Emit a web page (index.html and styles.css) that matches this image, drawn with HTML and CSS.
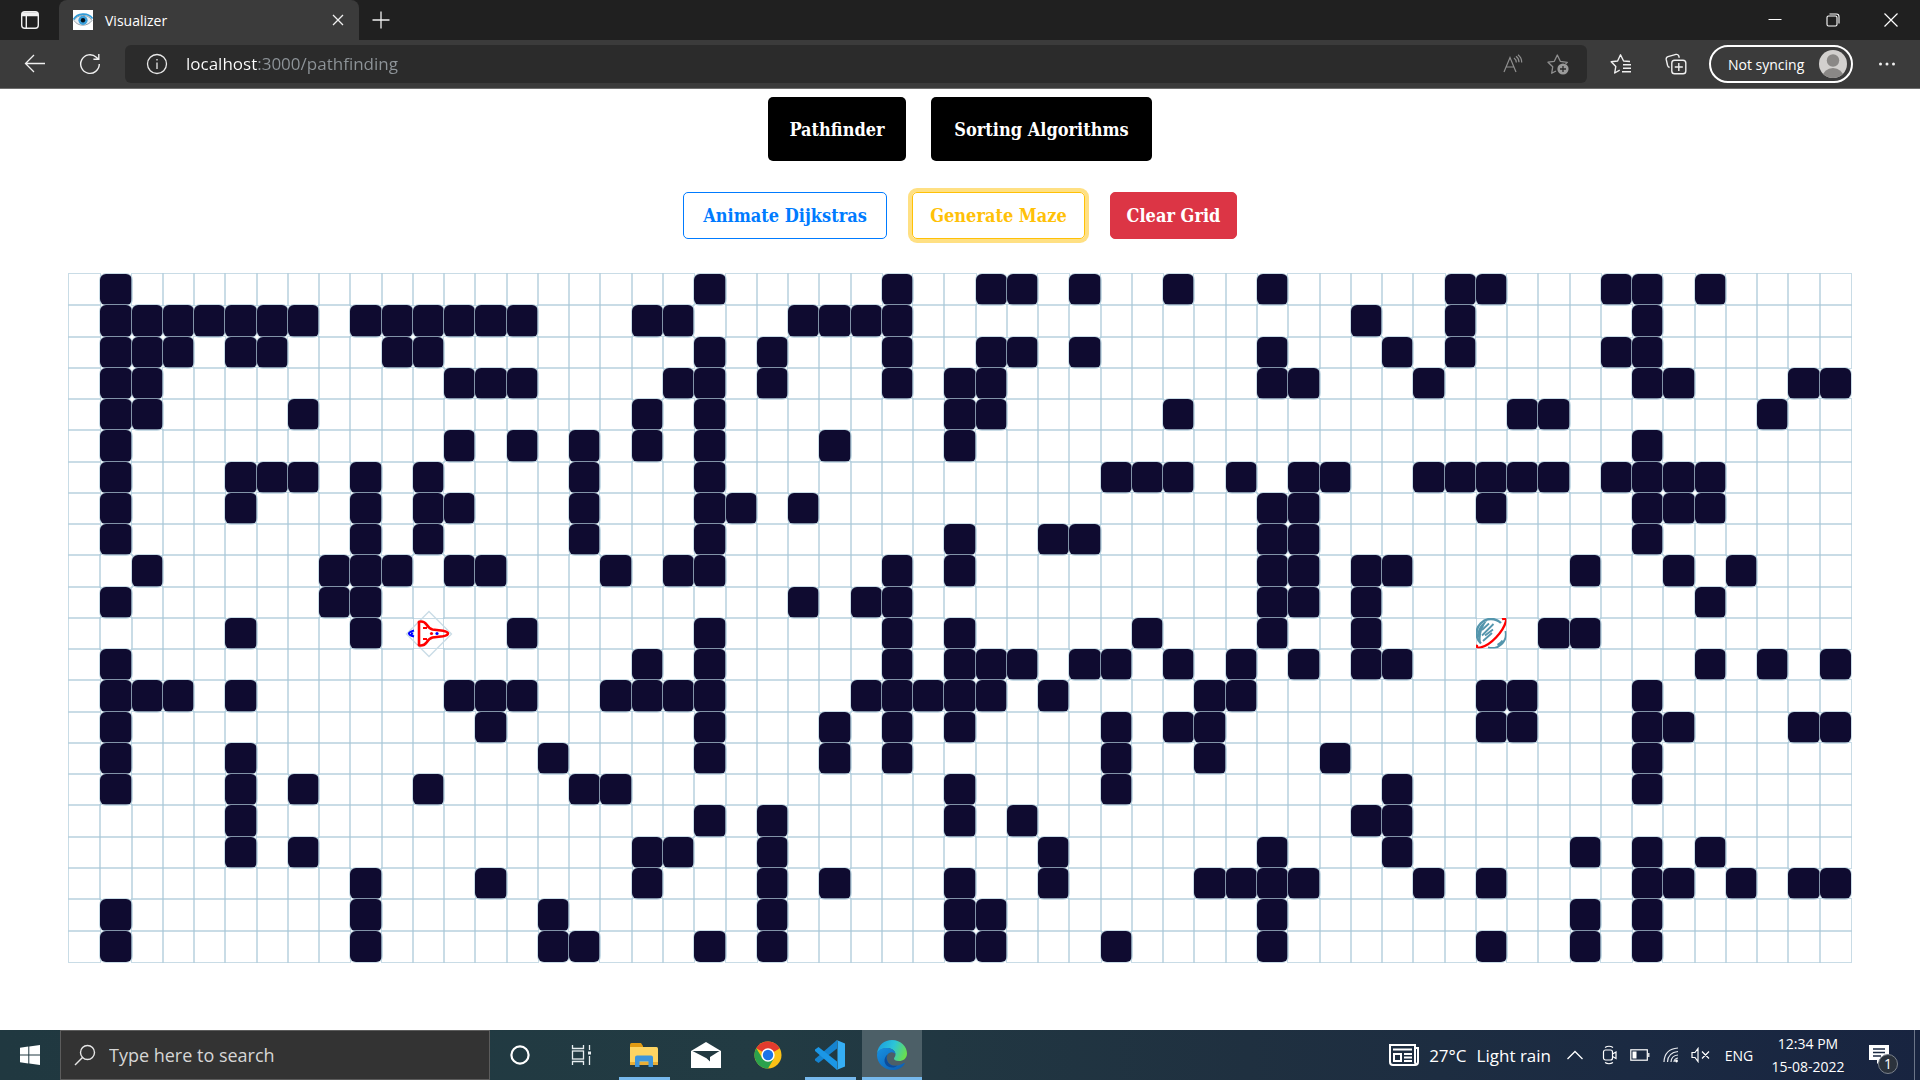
FILE: index.html
```html
<!DOCTYPE html>
<html lang="en">
<head>
<meta charset="utf-8">
<title>Visualizer</title>
<link rel="stylesheet" href="styles.css">
</head>
<body>
<header class="browser">
  <div class="tabstrip">
    <button class="icon-btn tab-actions" aria-label="Tab actions">
      <svg width="20" height="20" viewBox="0 0 20 20" fill="none" stroke="#f0f0f0" stroke-width="1.4"><rect x="1.7" y="1.7" width="16.6" height="16.6" rx="3"/><path d="M2 3.5h16M2 5h16" stroke-width="2.4"/><path d="M6.3 5v13"/></svg>
    </button>
    <div class="tab">
      <svg class="favicon" width="20" height="20" viewBox="0 0 20 20"><rect width="20" height="20" fill="#fff"/><path d="M1 10.5C4 4.500 15 3 19 10.500C15 16.500 5 17 1 10.500Z" fill="#e8eef2" stroke="#9aa3aa"/><path d="M0.500 9.500C4 3 15 2 19.500 8.500" fill="none" stroke="#2f9bd8" stroke-width="1.600"/><circle cx="10" cy="10.300" r="4.600" fill="#3aa0dc"/><circle cx="10" cy="10.300" r="2.200" fill="#06121c"/></svg>
      <span class="tab-title">Visualizer</span>
      <button class="icon-btn tab-close" aria-label="Close tab"><svg width="12" height="12" viewBox="0 0 12 12" stroke="#f0f0f0" stroke-width="1.3"><path d="M1 1l10 10M11 1L1 11"/></svg></button>
    </div>
    <button class="icon-btn new-tab" aria-label="New tab"><svg width="18" height="18" viewBox="0 0 18 18" stroke="#f0f0f0" stroke-width="1.3"><path d="M9 0.500v17M0.500 9h17"/></svg></button>
    <div class="window-controls">
      <button class="icon-btn" aria-label="Minimize"><svg width="14" height="14" viewBox="0 0 14 14" stroke="#fff"><path d="M0.500 6.500h13"/></svg></button>
      <button class="icon-btn" aria-label="Restore"><svg width="14" height="14" viewBox="0 0 14 14" fill="none" stroke="#fff" stroke-width="1.100"><rect x="1" y="3" width="10" height="10" rx="1.500"/><path d="M3.500 1h7q2.500 0 2.500 2.500v7"/></svg></button>
      <button class="icon-btn" aria-label="Close"><svg width="14" height="14" viewBox="0 0 14 14" stroke="#fff" stroke-width="1.200"><path d="M0.500 0.500l13 13M13.500 0.500l-13 13"/></svg></button>
    </div>
  </div>
  <div class="toolbar">
    <button class="icon-btn back" aria-label="Back"><svg width="22" height="20" viewBox="0 0 22 20" fill="none" stroke="#f0f0f0" stroke-width="1.300"><path d="M21 9.500H1.500M10 1L1.500 9.500 10 18"/></svg></button>
    <button class="icon-btn reload" aria-label="Refresh"><svg width="22" height="22" viewBox="0 0 22 22" fill="none" stroke="#f0f0f0" stroke-width="1.400"><path d="M20.300 11a9.300 9.300 0 1 1-3-6.800l2 1.800M19.800 1v5.300h-5.400"/></svg></button>
    <div class="address">
      <svg width="22" height="22" viewBox="0 0 22 22" fill="none" stroke="#e8e8e8" stroke-width="1.300"><circle cx="11" cy="11" r="9.500"/><path d="M11 9.500v6.500M11 6v1.600"/></svg>
      <input class="url" type="text" aria-label="Address" value="localhost:3000/pathfinding">
      <button class="icon-btn read-aloud" aria-label="Read aloud"><svg width="20" height="20" viewBox="0 0 20 20" fill="none" stroke="#8f8f8f" stroke-width="1.200"><path d="M1 18L7 3.500l6 14.500M3 13h8M11 4q2.300 1.700 2.300 4.500M13 2.300q3 2.200 3 6M15 0.800q3.700 2.800 3.700 7.700"/></svg></button>
      <button class="icon-btn" aria-label="Add to favorites"><svg width="22" height="22" viewBox="0 0 22 22" fill="none" stroke="#8f8f8f" stroke-width="1.300" stroke-linejoin="round"><path d="M9 18l-4.300 2.300 1-6.500L1 9.200l6.300-.9L10.300 2l3 6.300 7 1-1.800 1.800"/><circle cx="16" cy="16" r="5.600" fill="#9a9a9a" stroke="none"/><path d="M16 13v6M13 16h6" stroke="#2b2b2b"/></svg></button>
    </div>
    <button class="icon-btn favorites" aria-label="Favorites"><svg width="22" height="22" viewBox="0 0 22 22" fill="none" stroke="#f0f0f0" stroke-width="1.400" stroke-linejoin="round"><path d="M20 8.500l-6.400-.5L10.500 1.800 7.600 8l-6.400.8 4.600 4.600L4.700 20l5-2.800M13 11.800h8M13 15.300h8M12 18.800h9"/></svg></button>
    <button class="icon-btn collections" aria-label="Collections"><svg width="22" height="22" viewBox="0 0 22 22" fill="none" stroke="#f0f0f0" stroke-width="1.400"><path d="M4.600 14.500Q3 14 2.600 12.500L1.200 6.400Q1 4.200 3 3.600L11 1.400q2-.3 2.700 1.400l.6 2"/><rect x="6.800" y="7.300" width="14" height="13.500" rx="2.800"/><path d="M13.800 10v8M9.800 14h8"/></svg></button>
    <button class="profile">Not syncing
      <svg width="28" height="28" viewBox="0 0 28 28"><defs><clipPath id="face"><circle cx="14" cy="14" r="14"/></clipPath></defs><g clip-path="url(#face)"><rect width="28" height="28" fill="#d2d0ce"/><circle cx="14" cy="10.500" r="6.200" fill="#8a8886"/><ellipse cx="14" cy="27" rx="10.500" ry="9" fill="#8a8886"/></g></svg>
    </button>
    <button class="icon-btn more" aria-label="More"><svg width="18" height="6" viewBox="0 0 18 6" fill="#f0f0f0"><circle cx="2.500" cy="3" r="1.500"/><circle cx="9" cy="3" r="1.500"/><circle cx="15.500" cy="3" r="1.500"/></svg></button>
  </div>
</header>

<main class="page">
  <nav class="modes">
    <a class="mode mode-path" href="#pathfinding">Pathfinder</a>
    <a class="mode mode-sort" href="#sorting">Sorting Algorithms</a>
  </nav>
  <div class="actions">
    <button class="action action-animate">Animate Dijkstras</button>
    <button class="action action-maze">Generate Maze</button>
    <button class="action action-clear">Clear Grid</button>
  </div>
  <div class="board" id="board"></div>
</main>

<template id="start-icon">
  <svg class="ship" viewBox="0 0 48 48" fill="none"><path d="M24 1.500L46.500 24 24 46.500 1.500 24Z" stroke="#c9dce6" stroke-width="1.300"/><path d="M9 20.500q-10 3 0 6M6 23.500h2" stroke="#00f" stroke-width="2.200"/><path d="M14 13Q13 11.500 16 11.500q3.500 0 5.500 3 2.500 4 6 5 4.500.5 10.500 1.200 5 1 5 2.800t-5 2.800q-6 .7-10.500 1.200-3.500 1-6 5-2 3-5.500 3-3 0-2-1.500Z" stroke="red" stroke-width="2.600"/><path d="M18 18h4M18 29h4" stroke="red" stroke-width="2"/><circle cx="26.500" cy="23.500" r="1.600" fill="red"/><circle cx="32" cy="23.500" r="1.600" fill="#00f"/></svg>
</template>
<template id="end-icon">
  <svg class="planet" viewBox="0 0 31 31" fill="none"><path d="M25 5A13.500 13.500 0 0 0 5 25.500" stroke="#5596ad" stroke-width="2.400"/><path d="M11 2.800A14 14 0 0 0 5 25Q3 14 11 2.800Z" fill="#5596ad"/><path d="M29.500 13A14 14 0 0 1 12 29.500M26.500 22.500q-2 3-5 4.500" stroke="#5596ad" stroke-width="2"/><path d="M6 12l7-6.500M6 17.500L17.500 6M9 17.500l8-6M7 23l9-8" stroke="#5596ad" stroke-width="1.800"/><path d="M26 1.200q5-1.500 3.800 2.600-2 7.500-9.800 15.700T5 29.300q-5 1.500-4-2.500" stroke="red" stroke-width="2.400"/></svg>
</template>

<footer class="taskbar">
  <button class="icon-btn start" aria-label="Start"><svg width="20" height="20" viewBox="0 0 20 20" fill="#fff"><path d="M0 2.800l8.300-1.200v7.900H0zM9.300 1.400L20 0v9.500H9.300zM0 10.500h8.300v7.900L0 17.200zM9.300 10.500H20V20L9.300 18.600z"/></svg></button>
  <label class="search">
    <svg width="22" height="22" viewBox="0 0 22 22" fill="none" stroke="#e6e6e6" stroke-width="1.400"><circle cx="13.500" cy="8.500" r="7"/><path d="M8.500 13.500L1 21"/></svg>
    <input type="text" placeholder="Type here to search" aria-label="Search">
  </label>
  <div class="apps">
    <button class="app" aria-label="Cortana"><svg width="22" height="22" viewBox="0 0 22 22" fill="none" stroke="#fff" stroke-width="2.200"><circle cx="11" cy="11" r="8.600"/></svg></button>
    <button class="app" aria-label="Task view"><svg width="22" height="22" viewBox="0 0 22 22" fill="none" stroke="#e8eef0" stroke-width="1.300"><path d="M1.500 1v3.500h11V1M1.500 21v-3.500h11V21"/><rect x="1.500" y="7" width="11" height="8"/><path d="M18.500 1v5M18.500 12v9"/><path d="M18.500 7.500v3" stroke-width="3"/></svg></button>
    <button class="app running" aria-label="File Explorer"><svg width="28" height="26" viewBox="0 0 28 26"><path d="M0 2.500Q0 1 1.500 1H11l2 3v5H0z" fill="#e09a12"/><path d="M0 5h26.500q1.500 0 1.500 1.500V23H0z" fill="#fdd462"/><path d="M0 20h28v3H0z" fill="#e9ae35"/><path d="M5 25V15.500Q5 13.500 7 13.500h14q2 0 2 2V25h-4.500v-5.500h-9V25z" fill="#3d95db"/></svg></button>
    <button class="app" aria-label="Mail"><svg width="30" height="26" viewBox="0 0 30 26"><path d="M0 9L15 0l15 9v17H0z" fill="#fff"/><path d="M1.500 9h27L19 15v4.500l-3.500-3.200z" fill="#213840"/></svg></button>
    <button class="app" aria-label="Chrome"><svg width="28" height="28" viewBox="0 0 28 28"><circle cx="14" cy="14" r="13.500" fill="#fbc116"/><path d="M14 14L2.300 7.250A13.500 13.500 0 0 1 25.700 7.250z" fill="#e33b2e"/><path d="M2.300 7.250A13.500 13.500 0 0 0 14 27.500L19.800 17.500 14 14l-5.800 3z" fill="#2ba24c"/><path d="M25.700 7.250H14V14z" fill="#e33b2e"/><circle cx="14" cy="14" r="6.700" fill="#fff"/><circle cx="14" cy="14" r="5.200" fill="#1a73e8"/></svg></button>
    <button class="app running" aria-label="Visual Studio Code"><svg width="30" height="30" viewBox="0 0 30 30"><path d="M22 0v8.500L3.500 23 0 20.500v-1.500z" fill="#1583cf"/><path d="M22 30v-8.500L3.500 7 0 9.500v1.500z" fill="#1b97e6"/><path d="M21.500 0L30 3.500v23L21.500 30q1-.5 1-2V2q0-1.500-1-2z" fill="#35aef5"/></svg></button>
    <button class="app running active" aria-label="Edge"><svg width="30" height="30" viewBox="0 0 30 30"><defs><linearGradient id="edge-top" x1="0" x2="1" y1="0.300" y2="0.600"><stop offset="0" stop-color="#1c9fe0"/><stop offset=".5" stop-color="#2cc4d8"/><stop offset="1" stop-color="#6be04a"/></linearGradient><linearGradient id="edge-low" x1="0" x2="1" y1="0" y2="1"><stop offset="0" stop-color="#1790e0"/><stop offset="1" stop-color="#0c5cb0"/></linearGradient></defs><path d="M0 13.500C1 5 7.500 0 15 0c9 0 15 6.500 15 13.500 0 5-4 7.500-8 7.500-3.500 0-5-1.300-5-2.500 0-1 1.500-1.500 1.500-4C18.500 10.500 14.500 8 10 8 5 8 1.500 11 0 13.500z" fill="url(#edge-top)"/><path d="M0 15C0 10.500 4.500 8 9.500 8c5 0 9 2.500 9 6.500-1-2-3-2.500-5-2-3 .8-4.500 4-3.500 7.500 1.200 4.500 6 6.500 10.500 5.500 3-.5 5.500-2 6.500-2.500.8-.2 1 .5.500 1C25 28 20.500 30 15.500 30 6.500 30 0 23 0 15z" fill="url(#edge-low)"/><path d="M13.500 12.500c-3 .8-4.500 4-3.500 7.500 1.200 4.500 6 6.500 10.500 5.500-2 2-6 3-9.500 1C6 23.500 6 16 13.500 12.500z" fill="#0e4c99"/></svg></button>
  </div>
  <div class="tray">
    <button class="weather"><svg width="30" height="22" viewBox="0 0 30 22" fill="none" stroke="#fff" stroke-width="2"><path d="M26 4h3v14q0 3-3 3H4q-3 0-3-3V1h25v17q0 2 1.500 2"/><path d="M4 5.500h19M15 10h8M15 13.500h8M15 17h8"/><rect x="5" y="10" width="7" height="7"/></svg><span>27°C</span><span>Light rain</span></button>
    <button class="icon-btn chevron" aria-label="Hidden icons"><svg width="16" height="10" viewBox="0 0 16 10" fill="none" stroke="#fff" stroke-width="1.300"><path d="M0.500 9L8 1.500 15.500 9"/></svg></button>
    <button class="icon-btn meet" aria-label="Meet now"><svg width="16" height="20" viewBox="0 0 16 20" fill="none" stroke="#fff" stroke-width="1.200"><rect x="1.500" y="5" width="9" height="10" rx="2"/><path d="M10.500 9l3.500-2v6.500l-3.500-2M3 2.500Q7 0 11 2.500M3 17.500Q7 20 11 17.500"/></svg></button>
    <button class="icon-btn battery" aria-label="Battery"><svg width="20" height="12" viewBox="0 0 20 12" fill="none" stroke="#fff" stroke-width="1.200"><rect x="0.800" y="0.800" width="16.500" height="10.400"/><path d="M18.800 4v4"/><path d="M2.500 2.500h4v7h-4z" fill="#fff" stroke="none"/></svg></button>
    <button class="icon-btn wifi" aria-label="Network"><svg width="16" height="16" viewBox="0 0 16 16" fill="none" stroke="#e6e9ee" stroke-width="1.200"><path d="M1 15Q1.500 2 15 1M4.500 15Q5 5.500 15 4.500M8 15q.3-6.500 7-7M11 15q.2-3.500 4-4"/><circle cx="13.500" cy="14" r="1.400" fill="#fff" stroke="none"/></svg></button>
    <button class="icon-btn sound" aria-label="Volume"><svg width="19" height="16" viewBox="0 0 19 16" fill="none" stroke="#fff" stroke-width="1.200"><path d="M1 5.500h3L7 1.500v13L4 10.500H1zM11 4.500l7 7M18 4.500l-7 7"/></svg></button>
    <button class="language">ENG</button>
    <button class="clock"><time>12:34 PM</time><time>15-08-2022</time></button>
    <button class="notifications" aria-label="Notifications"><svg width="20" height="20" viewBox="0 0 20 20"><path d="M0 0h20v15h-8l-4 4v-4H0z" fill="#fff"/><path d="M4 4h12M4 7.500h12M4 11h8" stroke="#1b2942" stroke-width="1.300"/></svg><span class="badge">1</span></button>
  </div>
</footer>
<script src="board.js"></script>
</body>
</html>
```
FILE: styles.css
```css
* { box-sizing: border-box; }

body {
  margin: 0;
  min-height: 100vh;
  display: flex;
  flex-direction: column;
  background: #fff;
  font-family: "Open Sans", "Noto Sans", sans-serif;
  font-size: 14px;
}

button {
  border: 0;
  padding: 0;
  background: none;
  color: #fff;
  font: inherit;
}

svg { display: block; flex: none; }

.icon-btn { display: flex; align-items: center; justify-content: center; flex: none; }

/* Browser frame */
.browser { border-bottom: 1px solid #6e6e6e; background: #3b3b3b; color: #fff; }
.tabstrip { display: flex; height: 40px; background: #202020; }
.tab-actions { width: 59px; }
.tab {
  display: flex;
  align-items: center;
  width: 300px;
  padding: 0 15px 0 14px;
  border-radius: 8px 8px 0 0;
  background: #3b3b3b;
}
.tab-title { flex: 1; padding-left: 12px; }
.new-tab { width: 43px; }
.window-controls { display: flex; margin-left: auto; }
.window-controls .icon-btn { width: 58px; }

.toolbar { display: flex; align-items: center; height: 48px; }
.back { width: 70px; }
.reload { width: 40px; margin-right: 15px; }
.address {
  display: flex;
  align-items: center;
  flex: 1;
  height: 38px;
  padding: 0 18px 0 21px;
  border-radius: 6px;
  background: #2b2b2b;
}
.url {
  flex: 1;
  padding: 0 0 2px;
  margin-left: 18px;
  border: 0;
  outline: 0;
  font: 17px "Open Sans", "Noto Sans", sans-serif;
  color: transparent;
  background: linear-gradient(90deg, #fff 71px, #8e9499 71px);
  -webkit-background-clip: text;
  background-clip: text;
}
.read-aloud { margin-right: 24px; }
.favorites { width: 68px; }
.collections { width: 42px; }
.profile {
  display: flex;
  align-items: center;
  justify-content: space-between;
  width: 144px;
  height: 38px;
  margin-left: 12px;
  padding: 0 4px 0 17px;
  border: 2px solid #fff;
  border-radius: 19px;
}
.more { width: 67px; }

/* Page */
.page { flex: 1; }
.modes, .actions { display: flex; justify-content: center; gap: 25px; }
.modes { padding-top: 8px; }
.actions { padding: 31px 0 35px; }
.mode, .action {
  display: flex;
  align-items: center;
  justify-content: center;
  border-radius: 5px;
  font: bold 18px "DejaVu Serif Condensed", "DejaVu Serif", serif;
  white-space: nowrap;
}
.mode { height: 64px; background: #000; color: #fff; text-decoration: none; }
.mode-path { width: 138px; }
.mode-sort { width: 221px; }
.action { height: 47px; border: 1px solid; }
.action-animate { width: 204px; color: #007bff; }
.action-maze { width: 173px; color: #ffc107; box-shadow: 0 0 0 4px rgba(255, 193, 7, 0.5); }
.action-clear { width: 127px; border-color: #dc3545; background: #dc3545; }

.board {
  display: grid;
  grid-template-columns: repeat(57, 1fr);
  grid-template-rows: repeat(22, 1fr);
  aspect-ratio: 57 / 22;
  margin: 0 69px;
}
.cell { position: relative; min-width: 0; min-height: 0; box-shadow: 0 0 0 1px rgba(178, 205, 219, 0.7); }
.wall { border-radius: 6px; background: #0f0b30; }
.start-node, .end-node { display: flex; align-items: center; justify-content: center; box-shadow: none; }
.ship { width: 48px; height: 48px; position: absolute; z-index: 1; }
.planet { width: 31px; height: 31px; }

/* Taskbar */
.taskbar {
  display: flex;
  height: 50px;
  background: linear-gradient(90deg, #203840 0%, #223b43 40%, #1f3040 65%, #1b2a42 85%, #182440 100%);
  color: #fff;
}
.start { width: 60px; }
.search {
  display: flex;
  align-items: center;
  width: 430px;
  padding-left: 13px;
  border: 1px solid #5c5c5c;
  background: #333;
}
.search input {
  flex: 1;
  padding: 0;
  margin-left: 13px;
  border: 0;
  outline: 0;
  background: none;
  color: #fff;
  font: 18px "Open Sans", "Noto Sans", sans-serif;
}
.search input::placeholder { color: #d6d6d6; }
.apps { display: flex; gap: 2px; }
.app { display: flex; align-items: center; justify-content: center; width: 60px; }
.running {
  background: linear-gradient(#76b9ed, #76b9ed) center bottom / 51px 3px no-repeat;
}
.active { background-color: #4c5f67; background-size: 100% 3px; }

.tray { display: flex; align-items: center; margin-left: auto; }
.tray button { height: 50px; }
.weather { display: flex; align-items: center; gap: 10px; font-size: 17px; }
.chevron { width: 48px; }
.meet { width: 22px; }
.battery { width: 38px; }
.wifi { width: 24px; }
.sound { width: 34px; }
.language { width: 44px; }
.clock { display: flex; flex-direction: column; justify-content: center; align-items: center; width: 94px; line-height: 23px; }
.notifications { position: relative; width: 60px; padding-left: 14px; border-right: 1px solid #6b7588; margin-right: 5px; }
.badge {
  position: absolute;
  left: 23px;
  top: 24px;
  width: 20px;
  height: 20px;
  border: 1px solid #7b828c;
  border-radius: 50%;
  background: #2b323c;
  font-size: 14px;
  line-height: 18px;
}
```
FILE: board.js
```js
// Wall columns for each row of the board.
const COLUMNS = 57;
const START = [11, 11];
const END = [11, 45];
const WALLS = [
  [1,20,26,29,30,32,35,38,44,45,49,50,52],
  [1,2,3,4,5,6,7,9,10,11,12,13,14,18,19,23,24,25,26,41,44,50],
  [1,2,3,5,6,10,11,20,22,26,29,30,32,38,42,44,49,50],
  [1,2,12,13,14,19,20,22,26,28,29,38,39,43,50,51,55,56],
  [1,2,7,18,20,28,29,35,46,47,54],
  [1,12,14,16,18,20,24,28,50],
  [1,5,6,7,9,11,16,20,33,34,35,37,39,40,43,44,45,46,47,49,50,51,52],
  [1,5,9,11,12,16,20,21,23,38,39,45,50,51,52],
  [1,9,11,16,20,28,31,32,38,39,50],
  [2,8,9,10,12,13,17,19,20,26,28,38,39,41,42,48,51,53],
  [1,8,9,23,25,26,38,39,41,52],
  [5,9,14,20,26,28,34,38,41,47,48],
  [1,18,20,26,28,29,30,32,33,35,37,39,41,42,52,54,56],
  [1,2,3,5,12,13,14,17,18,19,20,25,26,27,28,29,31,36,37,45,46,50],
  [1,13,20,24,26,28,33,35,36,45,46,50,51,55,56],
  [1,5,15,20,24,26,33,36,40,50],
  [1,5,7,11,16,17,28,33,42,50],
  [5,20,22,28,30,41,42],
  [5,7,18,19,22,31,38,42,48,50,52],
  [9,13,18,22,24,28,31,36,37,38,39,43,45,50,51,53,55,56],
  [1,9,15,22,28,29,38,48,50],
  [1,9,15,16,20,22,28,29,33,38,45,48,50]
];

const board = document.getElementById("board");
const isAt = (node, row, col) => node[0] === row && node[1] === col;
const icon = (id) => document.getElementById(id).content.cloneNode(true);

WALLS.forEach((walls, row) => {
  for (let col = 0; col < COLUMNS; col++) {
    const cell = document.createElement("div");
    cell.className = "cell";
    if (walls.includes(col)) cell.classList.add("wall");
    if (isAt(START, row, col)) {
      cell.classList.add("start-node");
      cell.append(icon("start-icon"));
    }
    if (isAt(END, row, col)) {
      cell.classList.add("end-node");
      cell.append(icon("end-icon"));
    }
    board.append(cell);
  }
});
```
